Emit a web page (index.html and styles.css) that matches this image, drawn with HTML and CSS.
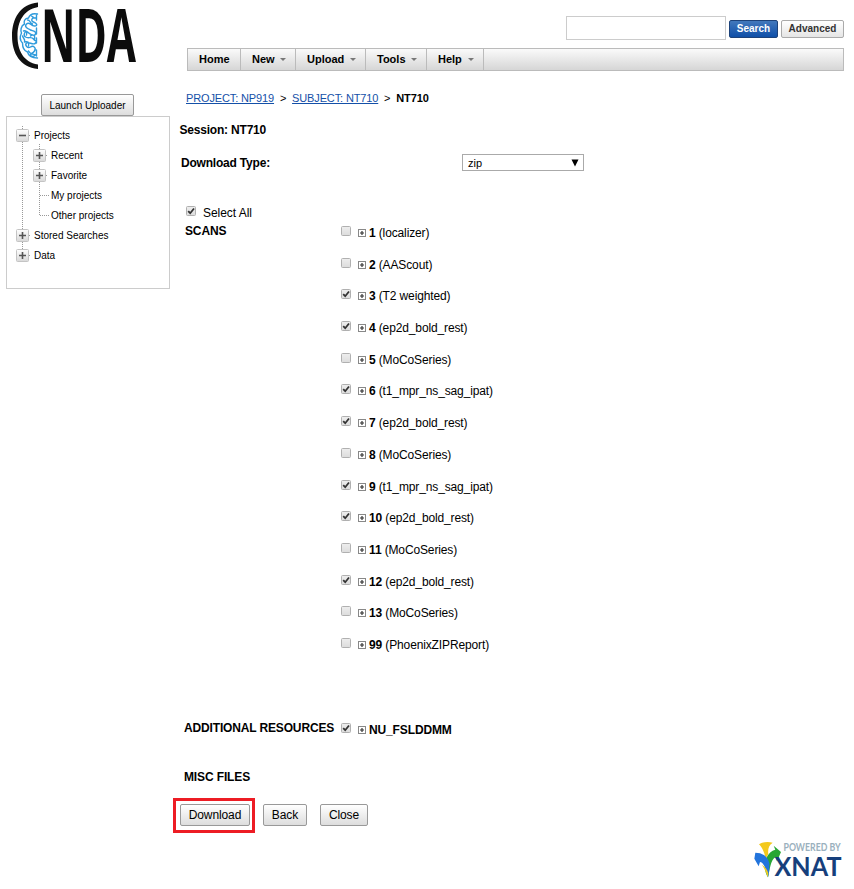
FILE: index.html
```html
<!DOCTYPE html>
<html lang="en">
<head>
<meta charset="utf-8">
<title>CNDA - Download NT710</title>
<link rel="stylesheet" href="styles.css">
</head>
<body>
<svg class="defs" width="0" height="0" aria-hidden="true">
  <defs>
    <linearGradient id="g" x1="0" y1="0" x2="0" y2="1"><stop offset="0" stop-color="#fff"/><stop offset="1" stop-color="#d8d8d8"/></linearGradient>
    <linearGradient id="c" x1="0" y1="0" x2="0" y2="1"><stop offset="0" stop-color="#eee"/><stop offset="1" stop-color="#dcdcdc"/></linearGradient>
    <symbol id="plus" viewBox="0 0 13 13"><rect x=".5" y=".5" width="12" height="12" rx="1" fill="url(#g)" stroke="#c4c4c4"/><path d="M3 6.5h7M6.5 3v7" stroke="#555" stroke-width="1.6"/></symbol>
    <symbol id="minus" viewBox="0 0 13 13"><rect x=".5" y=".5" width="12" height="12" rx="1" fill="url(#g)" stroke="#c4c4c4"/><path d="M3 6.5h7" stroke="#555" stroke-width="1.6"/></symbol>
    <symbol id="expand" viewBox="0 0 8 8"><rect x=".5" y=".5" width="7" height="7" fill="#fff" stroke="#888"/><path d="M2 4h4M4 2v4" stroke="#333" stroke-width="1.2"/></symbol>
    <symbol id="off" viewBox="0 0 10 10"><rect x=".5" y=".5" width="9" height="9" rx="1" fill="url(#c)" stroke="#b0b0b0"/></symbol>
    <symbol id="on" viewBox="0 0 10 10"><rect x=".5" y=".5" width="9" height="9" rx="1" fill="url(#c)" stroke="#b0b0b0"/><path d="M2.2 5.2l2 2L8 2.5" fill="none" stroke="#333" stroke-width="1.8"/></symbol>
  </defs>
</svg>
<div class="page">
  <aside class="side">
    <svg class="logo" width="140" height="76" viewBox="0 0 140 76">
      <path d="M39 2.500C21 4 13 19 13 36s8 31 26 33v-4.500C24 62 18.500 50 18.500 36S24 10 39 7z" fill="#111"/>
      <g fill="none" stroke="#2f9bdc" stroke-width="1.400" stroke-linecap="round" transform="translate(1.500 0)">
        <path d="M37 14c-5-1-8 1-9 4-4 0-5 4-4 6-4 2-4 7-3 9-2 4-1 8 1 10 0 5 2 8 5 9 1 4 5 6 10 6"/>
        <path d="M35 18c-4-1-5 3-2 4s5 4 1 4-5-5-8-2 2 5 4 6 6 1 5 4-6 0-8-2-5 3-2 5 6-1 8 2 4 1 2 4-7-2-9 0 1 6 4 4 6 1 4 4-4 2-4 4 3 2 5 0M27 20c3 0 2 3 5 4M23 31c2-1 4 1 3 4M24 42c3-1 5 0 4 4M30 36c2-2 5-1 4 3M36 15v5M36 28v6M36 38v5M36 50v6M31 16l3 2M22 36c1 3 3 3 2 6M28 51c1 3 4 3 7 4"/>
      </g>
      <text transform="translate(42 61.500) scale(.59 1)" font-size="73" textLength="161" lengthAdjust="spacingAndGlyphs">NDA</text>
    </svg>
    <button class="btn launch">Launch Uploader</button>
    <nav class="tree">
      <svg class="lines" width="60" height="150" viewBox="0 0 60 150"><path d="M15.500 9v130M32.500 27v72M16 18.500h8M33 38.500h8M33 58.500h8M33 78.500h9M33 98.500h9M16 118.500h8M16 138.500h8" fill="none" stroke="#999" stroke-dasharray="1 1"/></svg>
      <div class="node"><svg class="tog"><use href="#minus"/></svg><span>Projects</span></div>
      <div class="node sub"><svg class="tog"><use href="#plus"/></svg><span>Recent</span></div>
      <div class="node sub"><svg class="tog"><use href="#plus"/></svg><span>Favorite</span></div>
      <div class="node leaf"><span>My projects</span></div>
      <div class="node leaf"><span>Other projects</span></div>
      <div class="node"><svg class="tog"><use href="#plus"/></svg><span>Stored Searches</span></div>
      <div class="node"><svg class="tog"><use href="#plus"/></svg><span>Data</span></div>
    </nav>
  </aside>
  <main class="main">
    <div class="search"><input class="query" type="text" aria-label="Search"><button class="mini primary">Search</button><button class="mini">Advanced</button></div>
    <nav class="menu"><a class="home">Home</a><a class="new">New<i></i></a><a class="upload">Upload<i></i></a><a class="tools">Tools<i></i></a><a class="help">Help<i></i></a></nav>
    <div class="crumbs"><a href="#">PROJECT: NP919</a><span>&gt;</span><a href="#">SUBJECT: NT710</a><span>&gt;</span><b>NT710</b></div>
    <div class="content">
      <h1 class="session">Session: NT710</h1>
      <div class="type"><b>Download Type:</b><div class="select">zip<svg width="8" height="8" viewBox="0 0 8 8"><path d="M.5.500h7L4 7.500z"/></svg></div></div>
      <div class="all"><svg class="box"><use href="#on"/></svg>Select All</div>
      <section class="scans">
        <h2>SCANS</h2>
        <div class="list">
          <div class="row"><svg class="box"><use href="#off"/></svg><svg class="exp"><use href="#expand"/></svg><span><b>1</b> (localizer)</span></div>
          <div class="row"><svg class="box"><use href="#off"/></svg><svg class="exp"><use href="#expand"/></svg><span><b>2</b> (AAScout)</span></div>
          <div class="row"><svg class="box"><use href="#on"/></svg><svg class="exp"><use href="#expand"/></svg><span><b>3</b> (T2 weighted)</span></div>
          <div class="row"><svg class="box"><use href="#on"/></svg><svg class="exp"><use href="#expand"/></svg><span><b>4</b> (ep2d_bold_rest)</span></div>
          <div class="row"><svg class="box"><use href="#off"/></svg><svg class="exp"><use href="#expand"/></svg><span><b>5</b> (MoCoSeries)</span></div>
          <div class="row"><svg class="box"><use href="#on"/></svg><svg class="exp"><use href="#expand"/></svg><span><b>6</b> (t1_mpr_ns_sag_ipat)</span></div>
          <div class="row"><svg class="box"><use href="#on"/></svg><svg class="exp"><use href="#expand"/></svg><span><b>7</b> (ep2d_bold_rest)</span></div>
          <div class="row"><svg class="box"><use href="#off"/></svg><svg class="exp"><use href="#expand"/></svg><span><b>8</b> (MoCoSeries)</span></div>
          <div class="row"><svg class="box"><use href="#on"/></svg><svg class="exp"><use href="#expand"/></svg><span><b>9</b> (t1_mpr_ns_sag_ipat)</span></div>
          <div class="row"><svg class="box"><use href="#on"/></svg><svg class="exp"><use href="#expand"/></svg><span><b>10</b> (ep2d_bold_rest)</span></div>
          <div class="row"><svg class="box"><use href="#off"/></svg><svg class="exp"><use href="#expand"/></svg><span><b>11</b> (MoCoSeries)</span></div>
          <div class="row"><svg class="box"><use href="#on"/></svg><svg class="exp"><use href="#expand"/></svg><span><b>12</b> (ep2d_bold_rest)</span></div>
          <div class="row"><svg class="box"><use href="#off"/></svg><svg class="exp"><use href="#expand"/></svg><span><b>13</b> (MoCoSeries)</span></div>
          <div class="row"><svg class="box"><use href="#off"/></svg><svg class="exp"><use href="#expand"/></svg><span><b>99</b> (PhoenixZIPReport)</span></div>
        </div>
      </section>
      <section class="resources">
        <h2>ADDITIONAL RESOURCES</h2>
        <div class="row"><svg class="box"><use href="#on"/></svg><svg class="exp"><use href="#expand"/></svg><b>NU_FSLDDMM</b></div>
      </section>
      <h2 class="misc">MISC FILES</h2>
      <div class="actions"><div class="mark"><button class="btn download">Download</button></div><button class="btn back">Back</button><button class="btn close">Close</button></div>
    </div>
    <footer class="footer">
      <svg width="90" height="40" viewBox="0 0 90 40">
        <g transform="translate(-14 -11) scale(.3333)">
          <path d="M57 43c12-8 28-9 41-5-12 8-15 20-13 34l-8 14c-3-16-9-32-20-43z" fill="#f3c91c"/>
          <path d="M84 142c-12-18-11-44-5-58 6-14 16-22 27-25l-5-12 22 19-12 28-5-12c-14 8-16 34-22 60z" fill="#27a634"/>
          <path d="M43 86l3-18c22 0 38 12 42 32 1 16-1 30-4 42-5-24-12-44-24-46l-4 13z" fill="#2274dc"/>
          <path d="M83 142c-5-16-10-28-17-37 10 5 16 15 19 25z" fill="#eecb23"/>
        </g>
        <text class="powered" transform="translate(29.500 10) scale(.9 1)" textLength="63.500" lengthAdjust="spacingAndGlyphs">POWERED BY</text>
        <text class="xnat" x="20.500" y="35" textLength="67" lengthAdjust="spacingAndGlyphs">XNAT</text>
      </svg>
    </footer>
  </main>
</div>
</body>
</html>
```
FILE: styles.css
```css
* { box-sizing: border-box; }
body { margin: 0; background: #fff; color: #000; font: 12px/16px "Liberation Sans", Arial, sans-serif; }
.defs { position: absolute; }
.page { display: flex; width: 854px; height: 889px; }
.side { display: flex; flex-direction: column; width: 173px; padding-left: 6px; flex: none; }
.main { display: flex; flex-direction: column; flex: 1; min-width: 0; }
.content { padding-left: 6px; letter-spacing: -.13px; }
h1, h2 { margin: 0; font-size: 12px; line-height: 16px; white-space: nowrap; }
svg { display: block; flex: none; overflow: visible; }

.logo { margin-left: -7px; }
.logo text { font-family: "Open Sans", sans-serif; font-weight: 700; fill: #0b0b0b; }
.btn { padding: 0; border: 1px solid #999; border-radius: 2px; background: linear-gradient(#fff, #ddd); color: #000; font: 12px "Liberation Sans", Arial, sans-serif; height: 22px; }
.launch { width: 93px; margin: 18px 0 0 35px; padding-top: 1px; font-size: 10px; }
.tree { position: relative; width: 164px; height: 173px; border: 1px solid #ccc; padding: 8px 0 0 9px; font-size: 10px; }
.lines { position: absolute; left: 0; top: 0; }
.node { position: relative; display: flex; align-items: center; gap: 5px; height: 20px; }
.node span { padding-top: 2px; }
.tog { width: 13px; height: 13px; }
.sub { padding-left: 17px; }
.leaf { padding-left: 35px; }

.search { display: flex; align-items: center; height: 24px; margin: 16px 0 0 393px; }
.query { width: 160px; height: 24px; border: 1px solid #ccc; padding: 0 4px; margin-right: 3px; }
.mini { width: 63px; height: 18px; margin-top: 2px; padding: 0 0 2px; border: 1px solid #aaa; border-radius: 2px; background: linear-gradient(#fff, #e5e5e5); color: #333; font: bold 10px "Liberation Sans", Arial, sans-serif; }
.primary { width: 49px; margin-right: 3px; border-color: #1d4279; background: linear-gradient(#4278bc, #0f4fa8); color: #fff; }
.menu { display: flex; height: 23px; width: 657px; margin: 8px 0 0 14px; border: 1px solid #bbb; background: linear-gradient(#fafafa, #d6d6d6); font-weight: bold; font-size: 11px; line-height: 21px; }
.menu a { display: flex; align-items: center; justify-content: space-between; padding: 0 9px 0 11px; border-right: 1px solid #bbb; }
.menu i { border: 3px solid transparent; border-top-color: #777; border-bottom: 0; }
.home { width: 53px; }
.new { width: 55px; }
.upload { width: 70px; }
.tools { width: 61px; }
.help { width: 57px; }

.crumbs { display: flex; margin: 19px 0 0 13px; font-size: 11px; letter-spacing: -.13px; }
.crumbs a { color: #1450a8; }
.crumbs span { width: 18px; text-align: center; }
.session { margin: 16px 0 0 .5px; letter-spacing: -.2px; }
.type { display: flex; height: 17px; margin: 16px 0 0 2px; align-items: center; }
.type b { width: 281px; letter-spacing: -.2px; }
.select { display: flex; align-items: center; justify-content: space-between; width: 122px; height: 17px; border: 1px solid #aaa; padding: 0 4px 0 5px; font-size: 11px; letter-spacing: 0; }
.all { display: flex; gap: 7px; height: 16px; margin: 34px 0 0 7px; letter-spacing: -.05px; }
.box { width: 10px; height: 10px; margin-top: 1px; }
.exp { width: 8px; height: 8px; margin: 4px 3px 0 7px; }
.scans { display: flex; height: 496px; margin-top: 2px; padding-left: 6px; }
.scans h2 { width: 156px; }
.list { padding-top: 2px; }
.list .row { height: 31.690px; }
.row { display: flex; white-space: nowrap; }
.resources { display: flex; height: 49px; margin-top: 1px; padding-left: 5px; }
.resources h2 { width: 157px; letter-spacing: -.15px; }
.resources .row { padding-top: 2px; }
.misc { margin-left: 5px; }
.actions { display: flex; margin: 13px 0 0 -6px; align-items: center; }
.mark { width: 82px; height: 35px; border: 3px solid #ed1c24; padding: 3px 0 0 4px; }
.download { width: 70px; display: block; }
.back { width: 44px; margin-left: 8px; }
.close { width: 48px; margin-left: 13px; }
.actions .btn { padding-bottom: 1px; letter-spacing: -.1px; }
.actions > .btn { margin-top: -1px; }
.footer { margin: 8px 0 0 581px; }
.powered { font: bold 10.5px Lato, sans-serif; fill: #9ab0bd; }
.xnat { font: bold 27px Lato, sans-serif; fill: #163f7c; }
```
